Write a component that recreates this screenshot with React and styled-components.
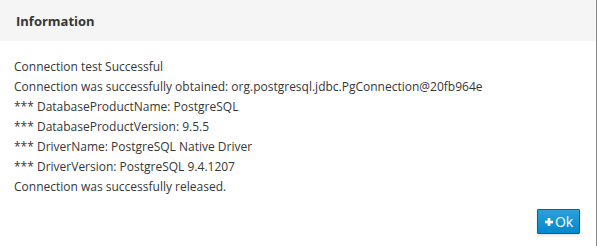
import styled, { createGlobalStyle } from 'styled-components'

const Global = createGlobalStyle`
  html, body {
    margin: 0;
    padding: 0;
    background: #fff;
  }
  body {
    font-family: "Open Sans", "Liberation Sans", sans-serif;
  }
`

const lines = [
  'Connection test Successful',
  'Connection was successfully obtained: org.postgresql.jdbc.PgConnection@20fb964e',
  '*** DatabaseProductName: PostgreSQL',
  '*** DatabaseProductVersion: 9.5.5',
  '*** DriverName: PostgreSQL Native Driver',
  '*** DriverVersion: PostgreSQL 9.4.1207',
  'Connection was successfully released.',
]

export default function App() {
  return (
    <>
      <Global />
      <Modal>
        <Header>
          <Title>Information</Title>
        </Header>
        <Body>
          {lines.map((l, i) => (
            <Line key={i}>{l}</Line>
          ))}
        </Body>
        <Footer>
          <Button>
            <svg width="8" height="8" viewBox="0 0 8 8">
              <rect x="2.7" y="0" width="2.6" height="8" fill="#fff" />
              <rect x="0" y="2.7" width="8" height="2.6" fill="#fff" />
            </svg>
            Ok
          </Button>
        </Footer>
      </Modal>
    </>
  )
}

const Modal = styled.div`
  width: 597px;
  height: 246px;
  box-sizing: border-box;
  border-right: 1px solid #8a8a8a;
  background: #fff;
  display: flex;
  flex-direction: column;
`

const Header = styled.div`
  height: 41px;
  background: #f5f5f5;
  display: flex;
  align-items: center;
  padding: 0 16px;
`

const Title = styled.h4`
  margin: 0;
  font-size: 13px;
  font-weight: 700;
  color: #363636;
`

const Body = styled.div`
  padding: 16px 14px 0;
`

const Line = styled.div`
  font-size: 12px;
  line-height: 20px;
  color: #363636;
  white-space: nowrap;
`

const Footer = styled.div`
  display: flex;
  justify-content: flex-end;
  padding: 12px 16px 0;
`

const Button = styled.button`
  height: 25px;
  width: 43px;
  box-sizing: border-box;
  display: flex;
  align-items: center;
  justify-content: center;
  gap: 2px;
  padding: 0 0 0 1px;
  border: 1px solid #00659c;
  border-radius: 1px;
  background: linear-gradient(#2ea0da, #0088ce);
  color: #fff;
  font-family: "Open Sans", "Liberation Sans", sans-serif;
  font-size: 14px;
  font-weight: 400;
  box-shadow: 0 2px 3px rgba(3, 3, 3, 0.1);
`
